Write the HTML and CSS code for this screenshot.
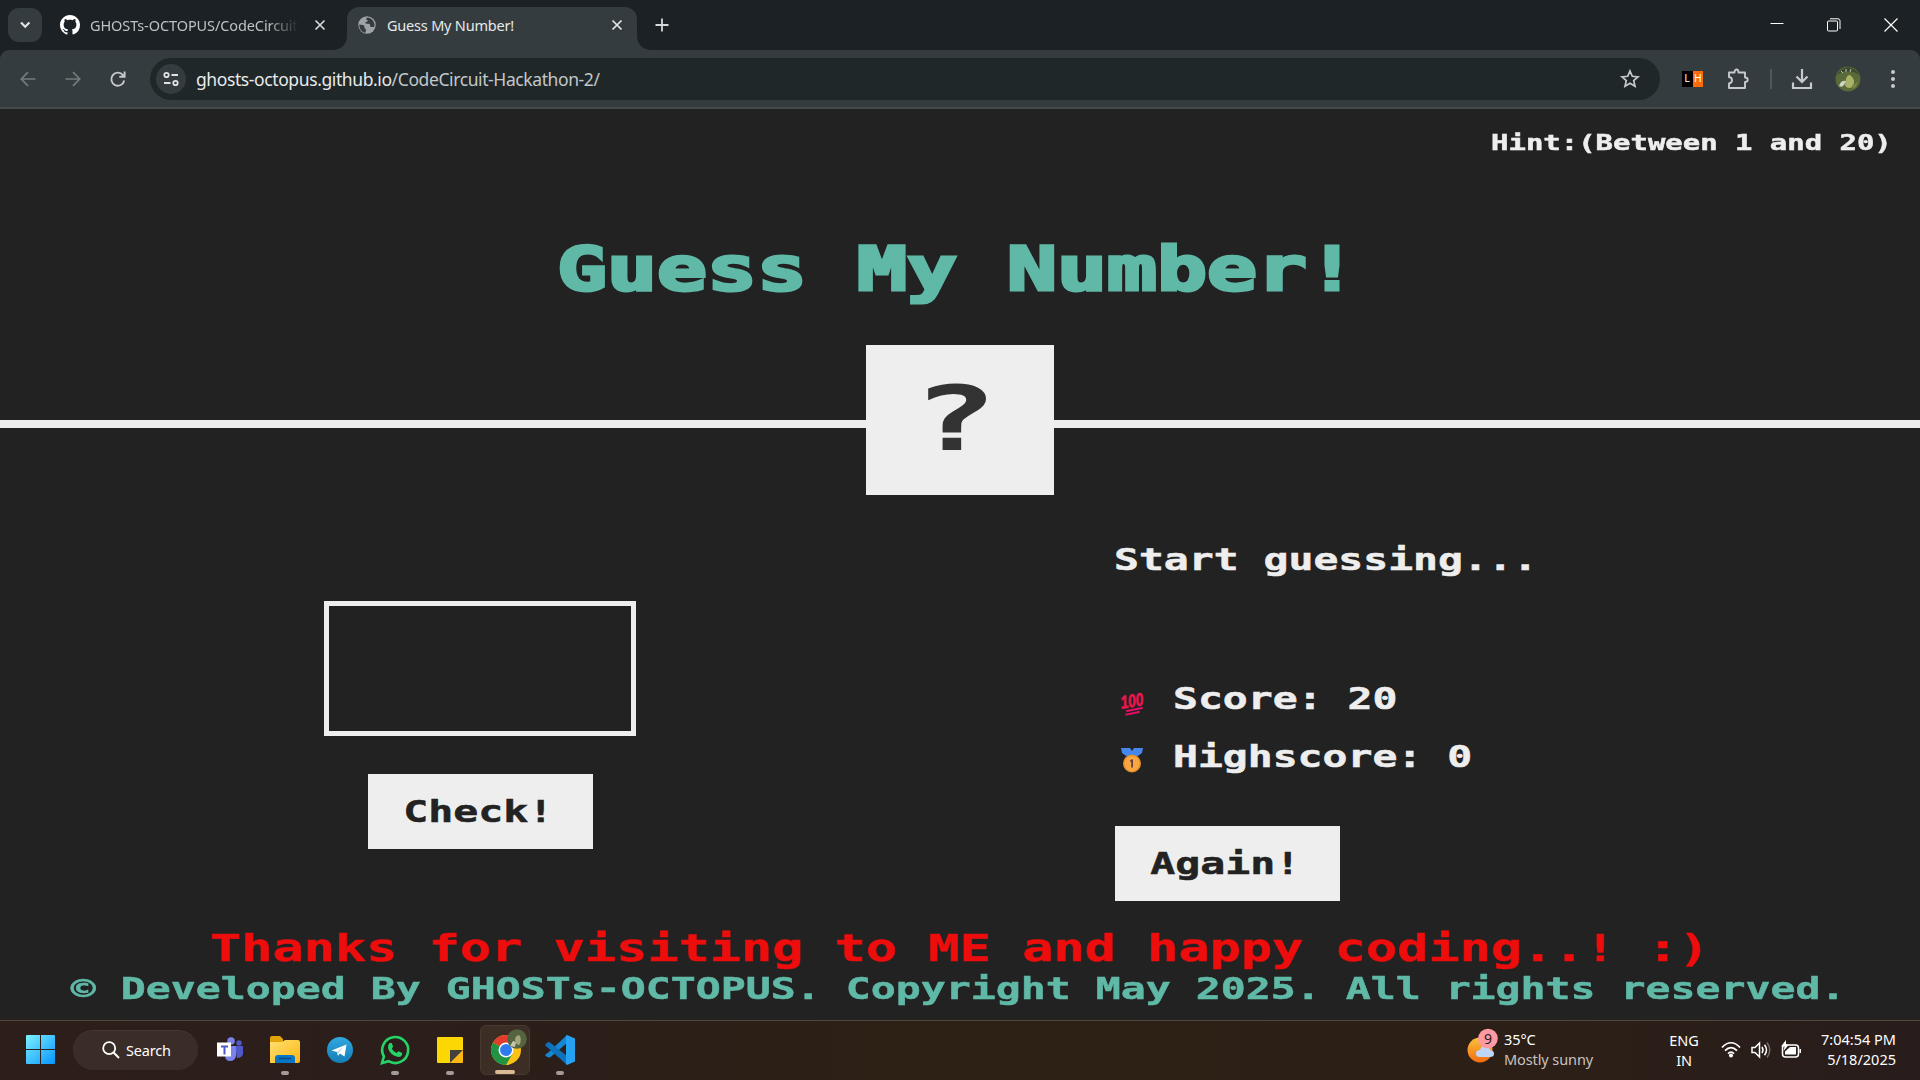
FILE: index.html
```html
<!DOCTYPE html>
<html lang="en">
<head>
<meta charset="utf-8">
<title>Guess My Number!</title>
<link rel="stylesheet" href="styles.css">
</head>
<body>
<header class="tabs">
  <div class="tab-search"><svg width="34" height="34" viewBox="0 0 34 34"><path d="M13 14.500l4.200 4.200 4.200-4.200" fill="none" stroke="#dfe3e4" stroke-width="2.200"/></svg></div>
  <div class="tab">
    <svg width="20" height="20" viewBox="0 0 16 16"><path fill="#fff" d="M8 0C3.580 0 0 3.580 0 8c0 3.540 2.290 6.530 5.470 7.590.4.070.55-.17.55-.38 0-.19-.01-.82-.01-1.490-2.010.37-2.530-.49-2.690-.94-.09-.23-.48-.94-.82-1.130-.28-.15-.68-.52-.01-.53.63-.01 1.080.58 1.230.82.72 1.210 1.870.87 2.330.66.07-.52.28-.87.51-1.070-1.780-.2-3.640-.89-3.640-3.950 0-.87.31-1.590.82-2.150-.08-.2-.36-1.020.08-2.120 0 0 .67-.21 2.200.82.64-.18 1.320-.27 2-.27s1.360.09 2 .27c1.530-1.040 2.200-.82 2.200-.82.44 1.100.16 1.920.08 2.120.51.56.82 1.270.82 2.150 0 3.070-1.870 3.750-3.650 3.950.29.25.54.73.54 1.480 0 1.070-.01 1.930-.01 2.200 0 .21.15.46.55.38A8 8 0 0 0 16 8c0-4.420-3.580-8-8-8z"/></svg>
    <span class="tab-title faded">GHOSTs-OCTOPUS/CodeCircuit</span>
    <svg width="12" height="12" viewBox="0 0 12 12"><path d="M1.500 1.500l9 9m0-9l-9 9" stroke="#d5d9da" stroke-width="1.700"/></svg>
  </div>
  <div class="tab active">
    <svg width="18" height="18" viewBox="0 0 18 18"><circle cx="9" cy="9" r="8.700" fill="#9da3a8"/><path d="M1.300 8.500c2 .2 4.500.4 5 1.500s-.5 2 .5 2.500 1.500.5 1 2l-.3 2.200C3.800 16.500 1.300 13 1.300 8.500zM10 1.500c-2 .5-2.500 2-1 2.500s1 1.500-.5 1.700-1.500 1.600 0 2 3-.5 3.500 1 0 2.300 1.500 2.300h2.800c1-4.500-1.800-8.500-6.300-9.500z" fill="#353c3f"/></svg>
    <span class="tab-title">Guess My Number!</span>
    <svg width="12" height="12" viewBox="0 0 12 12"><path d="M1.500 1.500l9 9m0-9l-9 9" stroke="#e3e6e7" stroke-width="1.700"/></svg>
  </div>
  <svg class="plus" width="14" height="14" viewBox="0 0 14 14"><path d="M7 .5v13M.5 7h13" stroke="#d5d9da" stroke-width="1.800"/></svg>
  <div class="window-buttons">
    <svg width="14" height="14" viewBox="0 0 14 14"><path d="M.5 5.500h13" stroke="#fff"/></svg>
    <svg width="14" height="14" viewBox="0 0 14 14" fill="none" stroke="#fff"><rect x=".5" y="3" width="10" height="10" rx="1"/><path d="M3 .8h8q2 0 2 2v8.200"/></svg>
    <svg width="14" height="14" viewBox="0 0 14 14"><path d="M.5.5l13 13m0-13l-13 13" stroke="#fff" stroke-width="1.200"/></svg>
  </div>
</header>

<nav class="toolbar">
  <svg width="16" height="16" viewBox="0 0 16 16" fill="none" stroke="#747b7e" stroke-width="1.700"><path d="M15.500 8H1.500M8 1.200L1.300 8 8 14.800"/></svg>
  <svg width="16" height="16" viewBox="0 0 16 16" fill="none" stroke="#747b7e" stroke-width="1.700"><path d="M.5 8h14M8 1.200L14.700 8 8 14.800"/></svg>
  <svg width="16" height="16" viewBox="0 0 16 16" fill="none" stroke="#c4cacd" stroke-width="1.900"><path d="M14.200 9.500a6.500 6.500 0 1 1-1.200-5.300l1.600 1.600M14.600.5v5.300H9.300"/></svg>
  <div class="omnibox">
    <div class="site-info"><svg width="16" height="16" viewBox="0 0 16 16" fill="none" stroke="#dfe3e4" stroke-width="1.800"><circle cx="3.500" cy="4" r="2.200"/><path d="M8.500 4H15M1 12h6.500"/><circle cx="12.500" cy="12" r="2.200"/></svg></div>
    <span class="url">ghosts-octopus.github.io<i>/CodeCircuit-Hackathon-2/</i></span>
    <svg width="20" height="19" viewBox="0 0 20 19"><path d="M10 2l2.300 5.300 5.700.5-4.300 3.800 1.300 5.600-5-3-5 3 1.300-5.600L2 7.800l5.700-.5z" fill="none" stroke="#c4cacd" stroke-width="1.700"/></svg>
  </div>
  <div class="ext"><b>L</b><b>H</b></div>
  <svg class="puzzle" width="22" height="22" viewBox="0 0 22 22"><path d="M2 4.500h5.500c0-4 4-4 4 0H18v5c3.600 0 3.600 4.400 0 4.400V20H2v-4.500c4-.6 4-5.900 0-6.500z" fill="none" stroke="#c4cacd" stroke-width="1.900" stroke-linejoin="round"/></svg>
  <span class="divider"></span>
  <svg class="download" width="22" height="22" viewBox="0 0 22 22"><path d="M11 1v12M5.500 8.500L11 14l5.500-5.500M2 14.500V20h18v-5.500" fill="none" stroke="#c4cacd" stroke-width="2.200"/></svg>
  <svg class="avatar" width="26" height="26" viewBox="0 0 26 26"><circle cx="13" cy="13" r="12.500" fill="#5a6a38"/><path d="M2 9q4-7 11-8 8 1 11 8-5-4-11-3-6-1-11 3z" fill="#3c4a2e"/><path d="M6 5l2 2m3-4v3m5-3l-1 3" stroke="#bcc7b9"/><path d="M11 13q1-4 4-4 3 2 4 6 0 6-4 7-5 0-5-4z" fill="#a9b36a"/><path d="M4 20q2-6 7-5l-2 4q-2 3-5 1z" fill="#d0d6c4"/><path d="M17 19q4-1 6-4-1 6-5 8z" fill="#77883f"/></svg>
  <svg class="dots" width="6" height="20" viewBox="0 0 6 20" fill="#c4cacd"><circle cx="3" cy="3" r="2"/><circle cx="3" cy="10" r="2"/><circle cx="3" cy="17" r="2"/></svg>
</nav>

<div class="page">
  <p class="between"><span class="pixel">Hint:(Between 1 and 20)</span></p>
  <h1><span class="pixel">Guess My Number!</span></h1>
  <div class="number-row"><div class="number"><span class="pixel">?</span></div></div>
  <main>
    <section class="left">
      <input class="guess" type="text" aria-label="Guess">
      <button class="btn"><span class="pixel">Check!</span></button>
    </section>
    <section class="right">
      <p class="message"><span class="pixel">Start guessing...</span></p>
      <p class="score"><svg width="34" height="30" viewBox="0 0 34 30"><text x="5.500" y="20" transform="rotate(-9 17 15)" class="hundred" textLength="23" lengthAdjust="spacingAndGlyphs">100</text><path d="M12 24L27 21M11 27.700L24 25" stroke="#ec0b69" stroke-width="1.800" stroke-linecap="round"/></svg><span class="pixel">Score: 20</span></p>
      <p class="score"><svg width="34" height="30" viewBox="0 0 34 30"><path d="M6 3h9l2 3 2-3h9l-1 5-7 5h-6L7 8z" fill="#4587ec"/><circle cx="17" cy="18.500" r="9" fill="#e8912f"/><circle cx="17" cy="18.500" r="7.400" fill="#fba73f"/><path d="M15 15.500l2-1.200h1V22.500h-1.800v-6l-1.200.3z" fill="#6b3c45"/></svg><span class="pixel">Highscore: 0</span></p>
      <button class="btn"><span class="pixel">Again!</span></button>
    </section>
  </main>
  <footer>
    <p class="thanks"><span class="pixel">Thanks for visiting to ME and happy coding..! :)</span></p>
    <p class="copyright"><span class="pixel">© Developed By GHOSTs-OCTOPUS. Copyright May 2025. All rights reserved.</span></p>
  </footer>
</div>

<div class="taskbar">
  <svg width="29" height="29" viewBox="0 0 29 29"><defs><linearGradient id="win" x2="1" y2="1"><stop stop-color="#7df0ff"/><stop offset="1" stop-color="#0795ff"/></linearGradient><linearGradient id="folder" x2="1" y2="1"><stop stop-color="#ffdf72"/><stop offset="1" stop-color="#fdb813"/></linearGradient><linearGradient id="tele" x2="0" y2="1"><stop stop-color="#32a8e0"/><stop offset="1" stop-color="#147db7"/></linearGradient><linearGradient id="sun" x2="0" y2="1"><stop stop-color="#fbc13c"/><stop offset="1" stop-color="#f26c12"/></linearGradient></defs><path fill="url(#win)" d="M1 0h13v14H0V1q0-1 1-1zm14 0h13q1 0 1 1v13H15zM0 15h14v14H1q-1 0-1-1zm15 0h14v13q0 1-1 1H15z"/></svg>
  <div class="search"><svg width="18" height="18" viewBox="0 0 18 18"><path d="M11.800 11.800l5.200 5.200" stroke="#fff" stroke-width="2"/><circle cx="7.200" cy="7.200" r="6" fill="none" stroke="#fff" stroke-width="1.800"/></svg><span>Search</span></div>
  <div class="apps">
    <div class="app"><svg width="28" height="26" viewBox="0 0 28 26"><circle cx="23" cy="6" r="2.700" fill="#5059c9"/><path d="M19 9h8v8q-1 4-6 4z" fill="#5059c9"/><circle cx="15" cy="4" r="3.800" fill="#7b83eb"/><path d="M10 9h10v10q-1 5-6 5t-5-6z" fill="#7b83eb"/><path d="M1 5.500h14v14H1z" fill="#fff"/><path d="M5 8.500h7v2H9.500v7h-2v-7H5z" fill="#5059c9"/></svg></div>
    <div class="app run"><svg width="30" height="27" viewBox="0 0 30 27"><path d="M0 2q0-2 2-2h8l3 3v6H0z" fill="#e3a30b"/><path d="M0 6h12l3-2h13q2 0 2 2v19q0 2-2 2H0z" fill="url(#folder)"/><path d="M5 27v-5q0-3 3-3h14q3 0 3 3v5z" fill="#0874c4"/><path d="M9 22.500h12" stroke="#034a87" stroke-width="1.500"/></svg></div>
    <div class="app"><svg width="26" height="26" viewBox="0 0 26 26"><circle cx="13" cy="13" r="13" fill="url(#tele)"/><path d="M4.500 13.500L19.500 7.500 17.500 19.500l-4.500-3-2 2.200-1-3.700z" fill="#fff"/><path d="M10 15l6-5-4.500 6-.5 2.500z" fill="#b4d4e8"/></svg></div>
    <div class="app run"><svg width="30" height="30" viewBox="0 0 30 30"><path d="M2 28l1.900-6.500A13 13 0 1 1 8.500 26.200z" fill="none" stroke="#25d366" stroke-width="2.600"/><path d="M9.500 8h2.200l1.500 3.700-1.500 1.900q1.500 3 4.800 4.500l1.900-1.900 3.800 1.800q.2 4-4 4Q9.700 20 8 13q-.3-3 1.500-5z" fill="#25d366"/></svg></div>
    <div class="app run"><svg width="26" height="26" viewBox="0 0 26 26"><path d="M0 1q0-1 1-1h24q1 0 1 1v12L13 26H1q-1 0-1-1z" fill="#fcd703"/><path d="M13 13h13L13 26z" fill="#43413f"/><path d="M26 13v12q0 1-1 1H13z" fill="#fdb813"/></svg></div>
    <div class="app run current"><svg width="38" height="38" viewBox="0 0 38 38"><circle cx="16" cy="22" r="15" fill="#fbc116"/><path d="M16 22L3 14.500A15 15 0 0 1 29 14.500L16 15z" fill="#e33b2e"/><path d="M3 14.500A15 15 0 0 0 16 37L22.500 25.700 16 22z" fill="#229342"/><circle cx="16" cy="22" r="7.500" fill="#fff"/><circle cx="16" cy="22" r="6" fill="#2f7bee"/><circle cx="27" cy="11" r="9.800" fill="#566340"/><path d="M25 12q0-4 4-5 3 3 1 9-3 3-5-4z" fill="#a1a77a"/><path d="M20 18l3-5 3 1-1 5z" fill="#c6c5ad"/></svg></div>
    <div class="app run"><svg width="30" height="30" viewBox="0 0 30 30"><path d="M22 0L5 16 0 20l2 2 3 .5L22 8z" fill="#1687d4"/><path d="M0 10l3-3 2 .5L22 21v9L2 12z" fill="#0b72bb"/><path d="M22 0l8 3.500v23L22 30l-1-1V1z" fill="#27a1f2"/></svg></div>
  </div>
  <div class="weather"><svg width="36" height="38" viewBox="0 0 36 38"><circle cx="14" cy="22" r="12.500" fill="url(#sun)"/><path d="M14 29q-4 0-4-3.500t4-3.500q1-4 5-4t5 4q4 .5 4 3.700T24 29z" fill="#bed6fa"/><circle cx="22" cy="10.500" r="9.800" fill="#ff99a4"/><text x="22" y="15.500" text-anchor="middle" class="badge-text">9</text></svg><p>35°C<br><i>Mostly sunny</i></p></div>
  <p class="lang">ENG<br>IN</p>
  <div class="tray">
    <svg width="20" height="17" viewBox="0 0 20 17" fill="none" stroke="#fff" stroke-width="1.700"><path d="M1 6.500q9-9.500 18 0M4 9.700q6-6.300 12 0M7 12.700q3-3.200 6 0"/><circle cx="10" cy="14.500" r="1.200" fill="#fff"/></svg>
    <svg width="20" height="18" viewBox="0 0 20 18" fill="none" stroke="#fff" stroke-width="1.500"><path d="M1 6.500h3L8.500 2v14L4 11.500H1z"/><path d="M11 6q2 3 0 6M13.500 3.800q4 5.200 0 10.400"/><path d="M16 1.500q5.500 7.500 0 15" stroke="#756b65"/></svg>
    <svg width="21" height="19" viewBox="0 0 21 19"><rect x="1.500" y="5" width="16" height="12" rx="3" fill="none" stroke="#fff" stroke-width="1.500"/><path d="M4 14.500v-3L9 7h6v7.500zM18.500 9h1.500v4h-1.500z" fill="#fff"/><path d="M5 0L0 6.500h3.500L2.500 11 8 4.500H5z" fill="#fff"/></svg>
  </div>
  <p class="clock">7:04:54 PM<br>5/18/2025</p>
</div>
</body>
</html>
```
FILE: styles.css
```css
* { box-sizing: border-box; margin: 0; padding: 0; }
html { font-size: 12.5px; }
body {
  width: 1920px; height: 1080px; overflow: hidden;
  display: flex; flex-direction: column;
  background: #1b2124; color: #eee;
  font-family: "Noto Sans", "Open Sans", sans-serif;
}
svg { display: block; flex: none; overflow: visible; }
i { font-style: normal; }

/* browser tabs */
.tabs { height: 50px; background: #1b2124; display: flex; align-items: center; flex: none; padding-left: 8px; }
.tab-search { width: 34px; height: 34px; border-radius: 11px; background: #353c3f; margin-right: 18px; }
.tab { display: flex; align-items: center; width: 287px; height: 34px; }
.tab-title { font-size: 14.500px; line-height: 20px; margin-left: 10px; width: 209px; white-space: nowrap; overflow: hidden; color: #e6e9ea; letter-spacing: -.2px; }
.tab:not(.active) .tab-title { color: #bcc2c4; }
.faded { letter-spacing: -.1px; -webkit-mask-image: linear-gradient(90deg, #000 85%, transparent 100%); mask-image: linear-gradient(90deg, #000 85%, transparent 100%); }
.tab > svg:last-child { margin-left: 15px; }
.tab.active { position: relative; height: 43px; align-self: flex-end; width: 290px; background: #353c3f; border-radius: 12px 12px 0 0; padding: 0 0 7px 11px; }
.tab.active .tab-title { width: 214px; margin-left: 11px; }
.tab.active > svg:last-child { margin-left: 10px; }
.tab.active::before, .tab.active::after { content: ""; position: absolute; bottom: 0; width: 13px; height: 13px; }
.tab.active::before { left: -13px; background: radial-gradient(circle at 0 0, transparent 12.500px, #353c3f 13px); }
.tab.active::after { right: -13px; background: radial-gradient(circle at 100% 0, transparent 12.500px, #353c3f 13px); }
.plus { margin-left: 18px; }
.window-buttons { margin-left: auto; display: flex; gap: 43px; padding-right: 22px; }

/* address bar */
.toolbar { height: 59px; flex: none; background: #353c3f; border-bottom: 2px solid #454a48; border-radius: 9px 9px 0 0; display: flex; align-items: center; padding-left: 20px; }
.toolbar > svg { margin-right: 29px; }
.toolbar > svg:nth-child(3) { margin-right: 24px; }
.omnibox { width: 1510px; height: 42px; border-radius: 21px; background: #1f2729; display: flex; align-items: center; padding: 0 20px 0 6px; }
.site-info { width: 30px; height: 30px; border-radius: 50%; background: #353c3f; display: grid; place-items: center; }
.url { flex: 1; font-size: 17.500px; line-height: 26px; margin-left: 10px; color: #e8eaeb; letter-spacing: -.4px; }
.url i { color: #c3c8ca; }
.ext { margin-left: 22px; display: flex; width: 21px; height: 16px; font: 10px/16px "Liberation Sans", sans-serif; text-align: center; color: #fff; }
.ext b { width: 10.500px; background: #000; font-weight: 400; }
.ext b + b { background: #ff6a0b; }
.toolbar > .puzzle { margin: 0 21px 0 24px; }
.divider { width: 2px; height: 20px; background: #4e575a; margin-right: 19px; }
.toolbar > .download { margin-right: 22px; }
.toolbar > .avatar { margin-right: 29px; }
.toolbar > .dots { margin: 0; }

/* wide block lettering */
.pixel { display: inline-block; white-space: pre; font-family: "DejaVu Sans Mono", monospace; font-weight: 700; transform: scaleX(1.384); -webkit-text-stroke: .5px currentColor; }
.page { height: 911px; flex: none; display: flex; flex-direction: column; background: #222; }
.between { height: 66px; padding: 18px 28px 0 0; text-align: right; font-size: 21px; line-height: 30px; }
.between .pixel { transform-origin: right; transform: scaleX(1.378); }
h1 { height: 170px; padding: 52px 6px 0 0; text-align: center; font-size: 60px; line-height: 80px; color: #60b9a7; }
h1 .pixel { -webkit-text-stroke-width: 3px; }
.number-row { height: 150px; display: flex; justify-content: center; background: linear-gradient(#eee, #eee) 0 75px / 100% 8px no-repeat; }
.number { width: 188px; height: 150px; padding-right: 11px; background: #eee; color: #333; text-align: center; font-size: 89px; line-height: 142px; }
.number .pixel { transform: scaleX(1.6); -webkit-text-stroke-width: 0; }
main { height: 425px; display: flex; }
.left { width: 960px; display: flex; flex-direction: column; align-items: center; padding-top: 106px; }
.right { padding: 43px 0 0 155px; }
.guess { width: 312px; height: 135px; border: 5px solid #eee; background: none; margin-bottom: 38px; outline: none; }
.btn { display: block; width: 225px; height: 75px; border: 0; background: #eee; color: #222; font-size: 30px; line-height: 75px; text-align: center; }
.btn .pixel { vertical-align: top; line-height: 75px; transform: translateX(-2px) scaleX(1.384); }
.right .pixel { transform-origin: left; transform: translateX(-1px) scaleX(1.38); }
.right .btn .pixel { transform-origin: center; transform: translateX(-2px) scaleX(1.384); }
.message { font-size: 30px; line-height: 42px; height: 132px; }
.score { display: flex; height: 58px; align-items: center; font-size: 30px; line-height: 42px; }
.score svg { margin: 6px 25px 0 0; }
.score + .btn { margin-top: 40px; }
.hundred { font: italic 900 18px "Liberation Sans", sans-serif; fill: #ec1650; stroke: #ec1650; stroke-width: .6px; }
footer { text-align: center; padding: 2px 4px 0 0; }
.thanks { font-size: 37.500px; line-height: 50px; height: 46px; color: #ee0d0d; padding-left: 4px; }
.copyright { font-size: 30px; line-height: 40px; color: #60b9a7; white-space: nowrap; }

/* desktop taskbar */
.taskbar { height: 60px; flex: none; border-top: 1px solid #55463c; background: linear-gradient(90deg, #2d1e19, #2b1e1b 22%, #2d2014 50%, #2c1f17 80%, #281d1c); display: flex; align-items: center; padding: 0 0 2px 26px; color: #fff; font-size: 14.500px; line-height: 20px; }
.search { width: 125px; height: 40px; border-radius: 20px; margin-left: 18px; background: #3a2c27; border-top: 1px solid #463833; display: flex; align-items: center; padding-left: 29px; gap: 6px; letter-spacing: -.2px; }
.apps { display: flex; gap: 5px; margin-left: 7px; }
.app { width: 50px; height: 50px; display: grid; place-items: center; position: relative; border-radius: 6px; }
.app.run::after { content: ""; position: absolute; left: 21px; bottom: 0; width: 8px; height: 4px; border-radius: 2px; background: #a29b98; }
.app.current { background: #3d2e25; border: 1px solid #483a31; }
.app.current svg { margin: -5px 0 0 8px; }
.app.current::after { left: 14px; bottom: 0; width: 20px; background: #dabb94; }
.weather { display: flex; margin-left: 881px; width: 170px; align-items: center; letter-spacing: -.1px; gap: 2px; }
.weather svg { margin-top: -6px; }
.weather p { white-space: nowrap; margin-top: -1px; }
.weather i { color: #c9c3c0; }
.badge-text { font: 14px "Noto Sans", sans-serif; fill: #222; }
.lang { text-align: center; width: 40px; margin-left: 28px; letter-spacing: -.1px; }
.tray { display: flex; gap: 10px; margin-left: 17px; align-items: center; }
.clock { text-align: right; margin: -1px 0 0 auto; padding-right: 24px; white-space: nowrap; }
```
